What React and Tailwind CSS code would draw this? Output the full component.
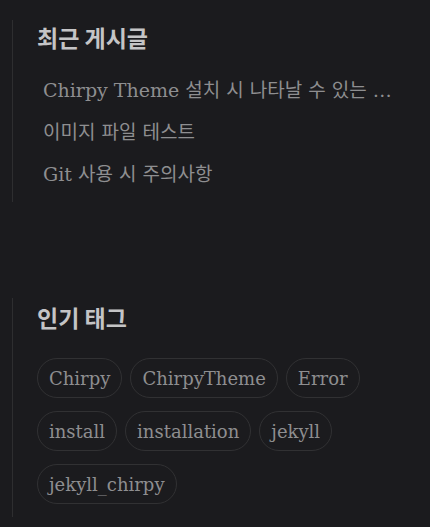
import React from "react";

const recentPosts = [
  "Chirpy Theme 설치 시 나타날 수 있는 오류 해결 방법",
  "이미지 파일 테스트",
  "Git 사용 시 주의사항",
];

const tags = ["Chirpy", "ChirpyTheme", "Error", "install", "installation", "jekyll", "jekyll_chirpy"];

const bodyFont = { fontFamily: '"DejaVu Serif", "Noto Sans CJK KR", serif' };
const headFont = { fontFamily: '"Noto Sans CJK KR", "Noto Sans", sans-serif' };

function App() {
  return (
    <div className="w-[430px] h-[527px] overflow-hidden bg-[#1b1b1e] pt-[20px]">
      <section className="ml-[12px] border-l border-[#2e2e30] pl-[24px] pt-[3px] pb-[7px]">
        <h2 className="text-[23px] leading-[28px] font-bold text-[#c4c4c6] mb-[18px]" style={headFont}>
          최근 게시글
        </h2>
        <ul className="pl-[6px] pr-[26px]">
          {recentPosts.map((p) => (
            <li
              key={p}
              className="h-[42px] leading-[42px] text-[19px] text-[#8e8e90] truncate"
              style={bodyFont}
            >
              {p}
            </li>
          ))}
        </ul>
      </section>

      <section className="mt-[96px] ml-[12px] border-l border-[#2e2e30] pl-[24px] pt-[5px] pb-[13px]">
        <h2 className="text-[23px] leading-[28px] font-bold text-[#c4c4c6] mb-[27px]" style={headFont}>
          인기 태그
        </h2>
        <div className="flex flex-wrap gap-x-[8px] gap-y-[13px] pr-[40px]">
          {tags.map((t) => (
            <span
              key={t}
              className="h-[40px] px-[11px] rounded-full border border-[#313133] flex items-center text-[18px] text-[#8e8e90]"
              style={bodyFont}
            >
              {t}
            </span>
          ))}
        </div>
      </section>
    </div>
  );
}

export default App;
